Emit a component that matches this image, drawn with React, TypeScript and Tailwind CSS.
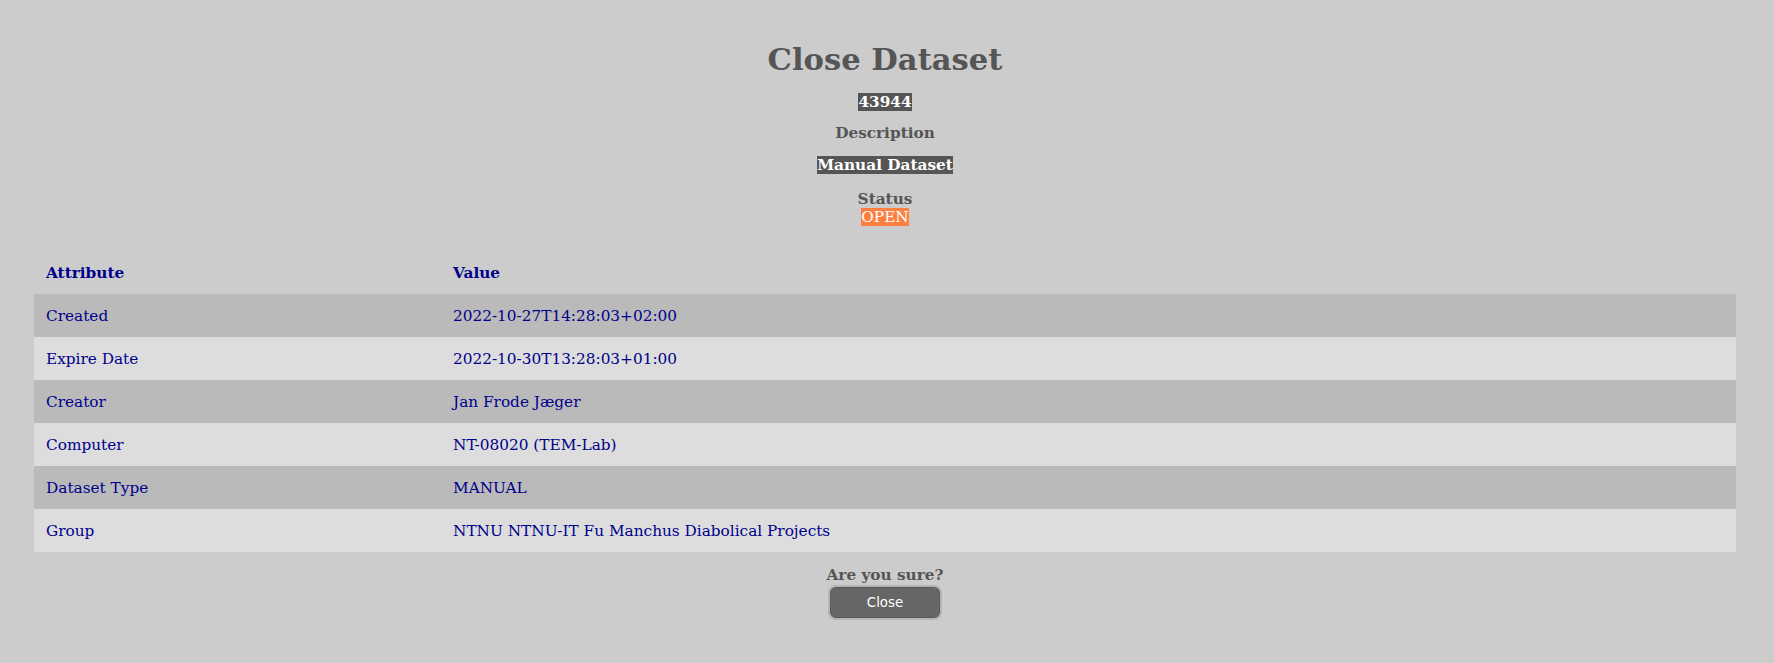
const rows = [
  { name: "Created", value: "2022-10-27T14:28:03+02:00" },
  { name: "Expire Date", value: "2022-10-30T13:28:03+01:00" },
  { name: "Creator", value: "Jan Frode Jæger" },
  { name: "Computer", value: "NT-08020 (TEM-Lab)" },
  { name: "Dataset Type", value: "MANUAL" },
  { name: "Group", value: "NTNU NTNU-IT Fu Manchus Diabolical Projects" },
];

export default function App() {
  return (
    <div className="min-h-[663px] bg-[#cccccc] pr-[4px] pt-[41px] text-[15.3px] text-[#555555] font-['DejaVu_Serif',serif]">
      {/* Header */}
      <div className="flex flex-col items-center text-center">
        <h1 className="text-[30.6px] font-bold leading-[36px]">Close Dataset</h1>
        <div className="mt-[16px] leading-[18px]">
          <span className="bg-[#555555] font-bold text-white">43944</span>
        </div>
        <div className="mt-[13px] font-bold leading-[18px]">Description</div>
        <div className="mt-[14px] leading-[18px]">
          <span className="bg-[#555555] font-bold text-white">Manual Dataset</span>
        </div>
        <div className="mt-[16px] font-bold leading-[18px]">Status</div>
        <div className="leading-[18px]">
          <span className="bg-[#ff7f40] text-white">OPEN</span>
        </div>
      </div>

      {/* Attributes */}
      <table className="mx-auto mt-[25px] w-[1702px] border-collapse text-left text-[#00008b]">
        <thead>
          <tr className="h-[43px]">
            <th className="w-[407px] px-[12px] pt-[2px] font-bold">Attribute</th>
            <th className="px-[12px] pt-[2px] font-bold">Value</th>
          </tr>
        </thead>
        <tbody>
          {rows.map((row, i) => (
            <tr
              key={row.name}
              className={i % 2 === 0 ? "h-[43px] bg-[#bababa]" : "h-[43px] bg-[#dddddd]"}
            >
              <td className="px-[12px] pt-[2px]">{row.name}</td>
              <td className="px-[12px] pt-[2px]">{row.value}</td>
            </tr>
          ))}
        </tbody>
      </table>

      {/* Confirm */}
      <div className="mt-[14px] flex flex-col items-center">
        <div className="font-bold leading-[18px]">Are you sure?</div>
        <button className="mt-[1px] h-[35px] w-[114px] rounded-[8px] border-2 border-[#b4b4b4] bg-[#666666] text-[13.33px] text-white font-['DejaVu_Sans',sans-serif] shadow-[inset_0_0_0_1px_#5a5a5a]">
          Close
        </button>
      </div>
    </div>
  );
}
